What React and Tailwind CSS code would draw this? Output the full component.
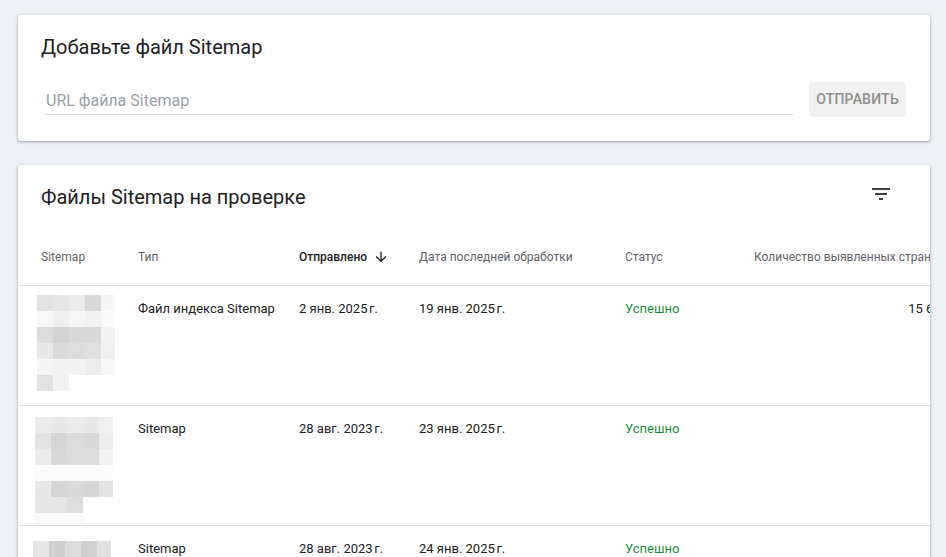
import React from 'react';

// blurred sitemap url thumbnails (pixelated)
const blurA = [
  ['bg-[#e3e3e3]', 'bg-[#e6e6e6]', 'bg-[#ebebeb]', 'bg-[#d9d9d9]', 'bg-[#f5f5f5]'],
  ['bg-[#f8f8f8]', 'bg-[#efefef]', 'bg-[#f6f6f6]', 'bg-[#f2f2f2]', 'bg-[#fafafa]'],
  ['bg-[#dcdcdc]', 'bg-[#d2d2d2]', 'bg-[#d8d8d8]', 'bg-[#d9d9d9]', 'bg-[#f3f3f3]'],
  ['bg-[#e8e8e8]', 'bg-[#dadada]', 'bg-[#dddddd]', 'bg-[#e0e0e0]', 'bg-[#f0f0f0]'],
  ['bg-[#f5f5f5]', 'bg-[#f3f3f3]', 'bg-[#f3f3f3]', 'bg-[#ececec]', 'bg-[#f7f7f7]'],
  ['bg-[#e3e3e3]', 'bg-[#f3f3f3]', '', '', ''],
];

const blurB = [
  ['bg-[#ebebeb]', 'bg-[#e8e8e8]', 'bg-[#ebebeb]', 'bg-[#e8e8e8]', 'bg-[#f0f0f0]'],
  ['bg-[#e3e3e3]', 'bg-[#d6d6d6]', 'bg-[#dcdcdc]', 'bg-[#d9d9d9]', 'bg-[#ececec]'],
  ['bg-[#ebebeb]', 'bg-[#d9d9d9]', 'bg-[#dcdcdc]', 'bg-[#dcdcdc]', 'bg-[#f3f3f3]'],
  ['bg-[#fbfbfb]', 'bg-[#fbfbfb]', 'bg-[#fbfbfb]', 'bg-[#fcfcfc]', 'bg-[#fcfcfc]'],
  ['bg-[#e8e8e8]', 'bg-[#d6d6d6]', 'bg-[#d9d9d9]', 'bg-[#d6d6d6]', 'bg-[#e3e3e3]'],
  ['bg-[#e6e6e6]', 'bg-[#e6e6e6]', 'bg-[#dddddd]', '', ''],
  ['bg-[#fafafa]', 'bg-[#fafafa]', 'bg-[#fafafa]', '', ''],
];

const blurC = [
  ['bg-[#e6e6e6]', 'bg-[#cfcfcf]', 'bg-[#dcdcdc]', 'bg-[#d0d0d0]', 'bg-[#e0e0e0]'],
  ['bg-[#efefef]', 'bg-[#e2e2e2]', 'bg-[#e8e8e8]', 'bg-[#f2f2f2]', ''],
];

const rows = [
  {
    id: 1,
    blur: blurA,
    pos: 'ml-[19px] mt-[9px]',
    type: 'Файл индекса Sitemap',
    sent: '2 янв. 2025\u202Fг.',
    processed: '19 янв. 2025\u202Fг.',
    status: 'Успешно',
    pages: '15 647',
  },
  {
    id: 2,
    blur: blurB,
    pos: 'ml-[17px] mt-[11px]',
    type: 'Sitemap',
    sent: '28 авг. 2023\u202Fг.',
    processed: '23 янв. 2025\u202Fг.',
    status: 'Успешно',
    pages: '',
  },
  {
    id: 3,
    blur: blurC,
    pos: 'ml-[15px] mt-[15px]',
    type: 'Sitemap',
    sent: '28 авг. 2023\u202Fг.',
    processed: '24 янв. 2025\u202Fг.',
    status: 'Успешно',
    pages: '',
  },
];

const Blur = ({ grid }) => (
  <div className="grid grid-cols-[16px_16px_16px_16px_14px] auto-rows-[16px] h-[108px] overflow-hidden">
    {grid.flat().map((c, i) => (
      <div key={i} className={c} />
    ))}
  </div>
);

const FilterIcon = () => (
  <svg width="24" height="24" viewBox="0 0 24 24" fill="#3c4043">
    <path d="M10 18h4v-2h-4v2zM3 6v2h18V6H3zm3 7h12v-2H6v2z" />
  </svg>
);

const ArrowDown = () => (
  <svg width="16" height="16" viewBox="0 0 24 24" fill="#202124">
    <path d="M20 12l-1.41-1.41L13 16.17V4h-2v12.17l-5.58-5.59L4 12l8 8 8-8z" />
  </svg>
);

const App = () => {
  return (
    <div className="min-h-screen bg-[#eef1f6] pt-[15px] pl-[18px] pr-4 pb-10 font-['Roboto',sans-serif]">
      {/* Add sitemap card */}
      <div className="bg-white rounded-[3px] shadow-[0_1px_2px_rgba(60,64,67,0.3),0_1px_3px_1px_rgba(60,64,67,0.15)] pt-[18px] pl-[23px] pr-6 pb-6">
        <h2 className="text-[20px] leading-7 text-[#202124]">Добавьте файл Sitemap</h2>
        <div className="flex items-center gap-4 mt-[21px]">
          <div className="flex-1 ml-[5px] h-[31px] pt-[3px] flex items-center border-b border-[#dadce0]">
            <span className="text-[16px] text-[#9aa0a6]">URL файла Sitemap</span>
          </div>
          <button className="h-[35px] w-[97px] rounded bg-[#f1f1f1] text-[14px] font-medium text-[#8f8f8f] tracking-[0.2px]">
            ОТПРАВИТЬ
          </button>
        </div>
      </div>

      {/* Submitted sitemaps */}
      <div className="mt-6 bg-white rounded-[3px] shadow-[0_1px_2px_rgba(60,64,67,0.3),0_1px_3px_1px_rgba(60,64,67,0.15)] overflow-hidden">
        <div className="flex justify-between items-start pt-[18px] pl-[23px] pr-[37px]">
          <h2 className="text-[20px] leading-7 text-[#202124]">Файлы Sitemap на проверке</h2>
          <button className="mt-[-1px]">
            <FilterIcon />
          </button>
        </div>

        <div className="mt-[18px] w-max">
          {/* header */}
          <div className="flex h-[57px] items-center border-b border-[#e0e0e0] text-[12px] text-[#5f6368] whitespace-nowrap">
            <div className="w-[120px] pl-[23px]">Sitemap</div>
            <div className="w-[161px]">Тип</div>
            <div className="w-[120px] flex items-center gap-[6px] text-[#202124] font-medium">
              Отправлено <ArrowDown />
            </div>
            <div className="w-[206px]">Дата последней обработки</div>
            <div className="w-[129px]">Статус</div>
            <div className="w-[194px]">Количество выявленных страниц</div>
          </div>

          {rows.map((row) => (
            <div
              key={row.id}
              className="flex h-[120px] border-b border-[#e0e0e0] text-[13px] leading-5 text-[#202124] whitespace-nowrap"
            >
              <div className="w-[120px]">
                <div className={row.pos}>
                  <Blur grid={row.blur} />
                </div>
              </div>
              <div className="w-[161px] pt-[13px]">{row.type}</div>
              <div className="w-[120px] pt-[13px]">{row.sent}</div>
              <div className="w-[206px] pt-[13px]">{row.processed}</div>
              <div className="w-[129px] pt-[13px] text-[#1e8e3e]">{row.status}</div>
              <div className="w-[194px] pt-[13px] text-right">{row.pages}</div>
            </div>
          ))}
        </div>
      </div>
    </div>
  );
};

export default App;
